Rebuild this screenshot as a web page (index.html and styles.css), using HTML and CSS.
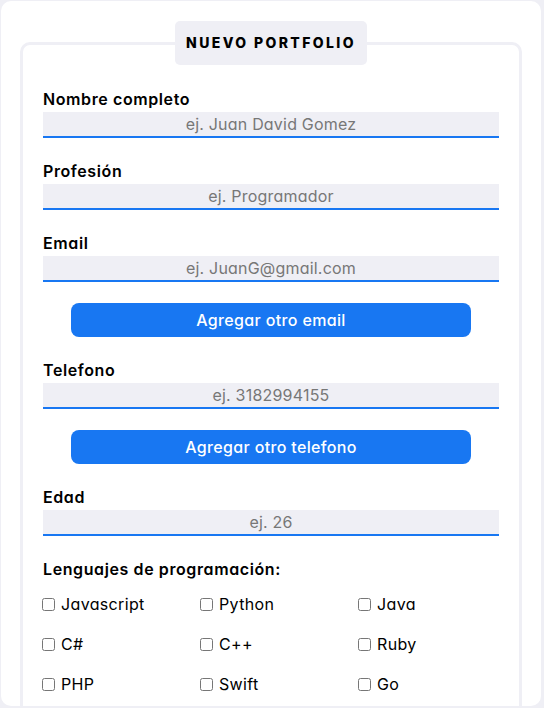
FILE: index.html
```html
<!DOCTYPE html>
<html lang="es">
<head>
<meta charset="utf-8">
<title>Nuevo Portfolio</title>
<link rel="stylesheet" href="styles.css">
</head>
<body>
<div class="card">
  <form class="form">
    <fieldset class="fieldset">
      <legend class="legend">Nuevo Portfolio</legend>
      <div class="fields">
        <div class="group">
          <label class="label" for="nombre">Nombre completo</label>
          <input class="input" id="nombre" type="text" placeholder="ej. Juan David Gomez">
        </div>
        <div class="group">
          <label class="label" for="profesion">Profesión</label>
          <input class="input" id="profesion" type="text" placeholder="ej. Programador">
        </div>
        <div class="group">
          <label class="label" for="email">Email</label>
          <input class="input" id="email" type="text" placeholder="ej. JuanG@gmail.com">
        </div>
        <button class="btn" type="button">Agregar otro email</button>
        <div class="group">
          <label class="label" for="telefono">Telefono</label>
          <input class="input" id="telefono" type="text" placeholder="ej. 3182994155">
        </div>
        <button class="btn" type="button">Agregar otro telefono</button>
        <div class="group">
          <label class="label" for="edad">Edad</label>
          <input class="input" id="edad" type="text" placeholder="ej. 26">
        </div>
        <div class="group">
          <span class="label">Lenguajes de programación:</span>
          <div class="langs">
            <label class="lang"><input type="checkbox" class="check">Javascript</label>
            <label class="lang"><input type="checkbox" class="check">Python</label>
            <label class="lang"><input type="checkbox" class="check">Java</label>
            <label class="lang"><input type="checkbox" class="check">C#</label>
            <label class="lang"><input type="checkbox" class="check">C++</label>
            <label class="lang"><input type="checkbox" class="check">Ruby</label>
            <label class="lang"><input type="checkbox" class="check">PHP</label>
            <label class="lang"><input type="checkbox" class="check">Swift</label>
            <label class="lang"><input type="checkbox" class="check">Go</label>
          </div>
        </div>
      </div>
    </fieldset>
  </form>
</div>
</body>
</html>
```
FILE: styles.css
```css
* { box-sizing: border-box; }

html, body {
  margin: 0;
  background: #efeff5;
}

body {
  padding: 1px;
  font-family: Inter, "Noto Sans", sans-serif;
  font-feature-settings: "cv11" 1;
  color: #000;
}

.card {
  width: 540px;
  height: 705px;
  background: #fff;
  border-radius: 10px;
  padding: 20px 19px 0;
  overflow: hidden;
}

.form { margin: 0; }

.fieldset {
  margin: 0;
  border: 3px solid #efeff5;
  border-radius: 10px;
  padding: 23px 20px 20px;
  min-width: 0;
}

.legend {
  margin: 0 auto;
  padding: 12px 11px;
  background: #efeff5;
  border-radius: 5px;
  font-size: 14px;
  font-weight: 800;
  line-height: 20px;
  letter-spacing: 2.4px;
  text-transform: uppercase;
}

.fields {
  display: flex;
  flex-direction: column;
  gap: 22px;
}

.group {
  display: flex;
  flex-direction: column;
  gap: 2px;
}

.label {
  font-size: 16px;
  font-weight: 600;
  line-height: 22px;
  letter-spacing: 0.6px;
}

.input {
  width: 100%;
  height: 26px;
  margin: 0;
  padding: 0;
  border: none;
  border-bottom: 2px solid #1877f2;
  background: #efeff5;
  text-align: center;
  font-family: inherit;
  font-feature-settings: "cv11" 1;
  font-size: 16px;
  letter-spacing: 0.2px;
  color: #000;
  outline: none;
}

.input::placeholder { color: #777; }

.btn {
  align-self: center;
  width: 400px;
  height: 34px;
  margin-top: -1px;
  border: none;
  border-radius: 8px;
  background: #1877f2;
  color: #fff;
  font-family: inherit;
  font-feature-settings: "cv11" 1;
  font-size: 16px;
  font-weight: 500;
  letter-spacing: 0.35px;
}

.langs {
  display: grid;
  grid-template-columns: repeat(3, 158px);
  grid-auto-rows: 40px;
  margin-left: -1px;
  padding-top: 2px;
}

.lang {
  display: flex;
  align-items: center;
  gap: 6px;
  font-size: 16px;
  letter-spacing: 0.35px;
}

.check {
  width: 13px;
  height: 13px;
  margin: 0;
}
```
